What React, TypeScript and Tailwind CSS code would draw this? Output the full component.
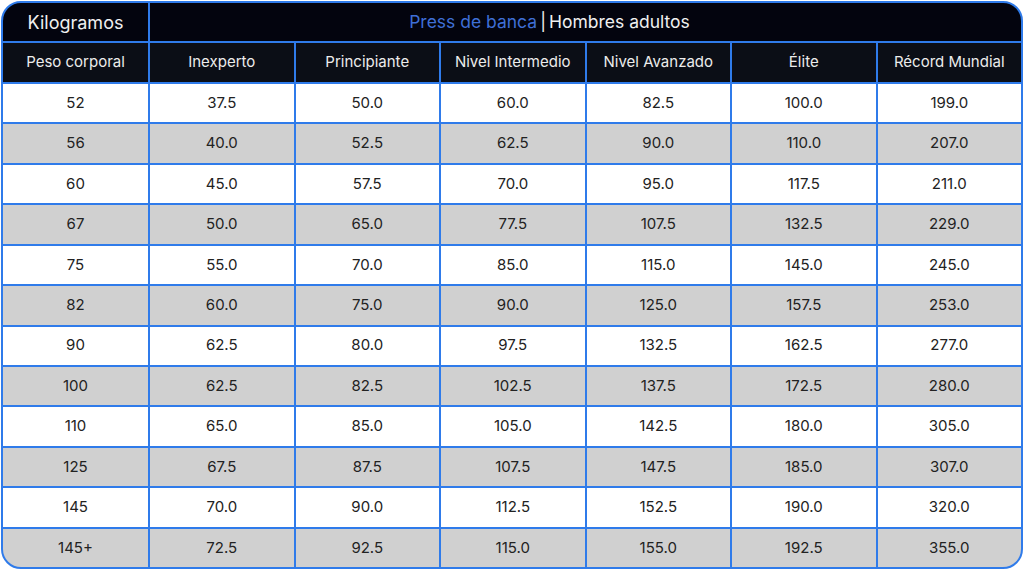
const levels = ['Inexperto', 'Principiante', 'Nivel Intermedio', 'Nivel Avanzado', 'Élite', 'Récord Mundial']

const rows: string[][] = [
  ['52', '37.5', '50.0', '60.0', '82.5', '100.0', '199.0'],
  ['56', '40.0', '52.5', '62.5', '90.0', '110.0', '207.0'],
  ['60', '45.0', '57.5', '70.0', '95.0', '117.5', '211.0'],
  ['67', '50.0', '65.0', '77.5', '107.5', '132.5', '229.0'],
  ['75', '55.0', '70.0', '85.0', '115.0', '145.0', '245.0'],
  ['82', '60.0', '75.0', '90.0', '125.0', '157.5', '253.0'],
  ['90', '62.5', '80.0', '97.5', '132.5', '162.5', '277.0'],
  ['100', '62.5', '82.5', '102.5', '137.5', '172.5', '280.0'],
  ['110', '65.0', '85.0', '105.0', '142.5', '180.0', '305.0'],
  ['125', '67.5', '87.5', '107.5', '147.5', '185.0', '307.0'],
  ['145', '70.0', '90.0', '112.5', '152.5', '190.0', '320.0'],
  ['145+', '72.5', '92.5', '115.0', '155.0', '192.5', '355.0'],
]

export default function App() {
  return (
    <div className="w-[1024px] h-[571px] bg-white p-px" style={{ fontFamily: 'Inter, "Noto Sans", sans-serif' }}>
      <div className="h-[568px] w-[1022px] overflow-hidden rounded-[20px] border-2 border-[#2f7bea] bg-[#2f7bea]">
        <div className="grid h-full grid-cols-[145px_repeat(6,1fr)] grid-rows-[38px_39px_repeat(12,1fr)] gap-[2px]">
          <div className="flex items-center justify-center bg-[#03040e] text-[18px] text-[#f0f0f0]">Kilogramos</div>
          <div className="col-span-6 flex items-center justify-center bg-[#03040e] pr-[72px] text-[17.5px] text-[#f0f0f0]">
            <span className="text-[#3f6fd6]">Press de banca</span>
            <span className="mx-[3px]">|</span>
            <span>Hombres adultos</span>
          </div>

          <div className="flex items-center justify-center bg-[#0b0e16] text-[15px] text-[#ececec]">Peso corporal</div>
          {levels.map((l) => (
            <div key={l} className="flex items-center justify-center bg-[#0b0e16] text-[15px] text-[#ececec]">
              {l}
            </div>
          ))}

          {rows.map((r, i) =>
            r.map((v, j) => (
              <div
                key={i + '-' + j}
                className={
                  'flex items-center justify-center text-[15px] text-[#222222] ' +
                  (i % 2 === 0 ? 'bg-white' : 'bg-[#d0d0d0]')
                }
              >
                {v}
              </div>
            ))
          )}
        </div>
      </div>
    </div>
  )
}
